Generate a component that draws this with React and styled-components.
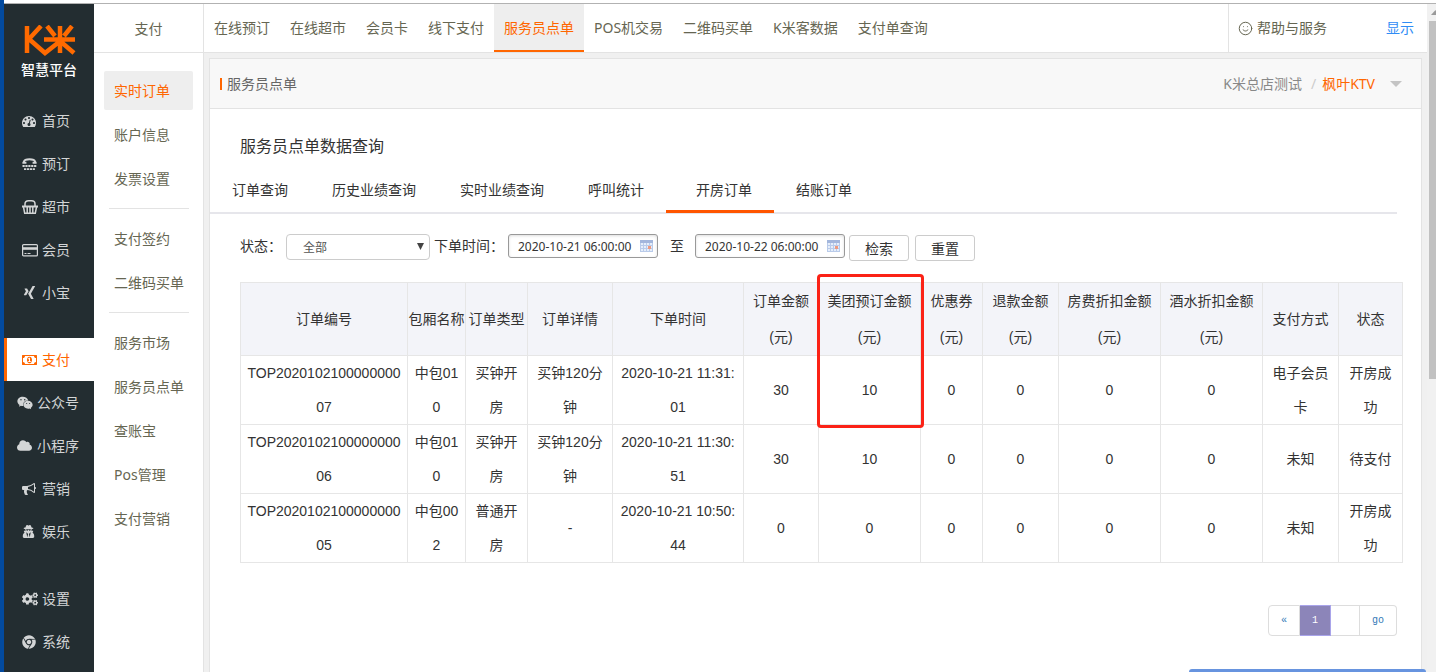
import React from "react";
import styled, { createGlobalStyle } from "styled-components";
import { FaXing, FaWeixin, FaCloud, FaUserSecret, FaCogs, FaChrome } from "react-icons/fa";
import { Smile } from "lucide-react";

const GlobalStyle = createGlobalStyle`
  * {
    box-sizing: border-box;
  }
  body {
    margin: 0;
    background-color: #f0f0f0;
    color: #333;
    font-family: "Noto Sans", "Noto Sans CJK SC", sans-serif;
    font-size: 14px;
    line-height: 20px;
  }
  a {
    color: inherit;
    text-decoration: none;
  }
  button, input, select {
    font-family: inherit;
  }
`;

const Window = styled.div`
  display: flex;
  flex-direction: column;
  min-height: 100vh;
  border-left: 4px solid #034a9e;
`;

const WindowEdge = styled.div`
  height: 4px;
  background-color: #fff;
  border-bottom: 1px solid #b2b2b2;
`;

const Page = styled.div`
  flex: 1;
  display: flex;
`;

const Sidebar = styled.nav`
  width: 90px;
  flex-shrink: 0;
  background-color: #232d31;
  color: #d3d5d6;
`;

const Brand = styled.div`
  display: flex;
  flex-direction: column;
  align-items: center;
  height: 95px;
  padding-top: 21px;
  svg {
    display: block;
  }
`;

const BrandName = styled.span`
  margin-top: 2px;
  color: #fff;
  font-size: 14px;
  font-weight: 500;
  line-height: 22px;
`;

const SideGroup = styled.div`
  margin-bottom: 24px;
`;

const SideLink = styled.a`
  display: flex;
  align-items: center;
  gap: 4px;
  height: 43px;
  padding-left: ${(props) => (props.$wide ? "13px" : "18px")};
  ${(props) =>
    props.$active &&
    `
    padding-left: 15px;
    border-left: 3px solid #ff6600;
    background-color: #fff;
    color: #ff6600;
  `}
`;

const IconSlot = styled.span`
  display: flex;
  align-items: center;
  width: 16px;
`;

const SubMenu = styled.nav`
  width: 110px;
  flex-shrink: 0;
  background-color: #fff;
  border-right: 1px solid #e3e3e3;
  color: #666652;
`;

const SubMenuTitle = styled.div`
  height: 49px;
  line-height: 49px;
  text-align: center;
  border-bottom: 1px solid #e3e3e3;
`;

const SubMenuList = styled.div`
  padding: 18px 10px;
  hr {
    margin: 10px 4px 10px 5px;
    border: 0;
    height: 1px;
    background-color: #e3e3e3;
  }
`;

const SubLink = styled.a`
  display: block;
  height: 39px;
  margin-bottom: 5px;
  padding-left: 10px;
  line-height: 39px;
  border-radius: 2px;
  white-space: nowrap;
  color: ${(props) => (props.$active ? "#ff6600" : "inherit")};
  background-color: ${(props) => (props.$active ? "#eeeeee" : "transparent")};
`;

const Main = styled.div`
  flex: 1;
  min-width: 0;
  display: flex;
  flex-direction: column;
`;

const TopBar = styled.header`
  display: flex;
  height: 49px;
  background-color: #fff;
  border-bottom: 1px solid #e3e3e3;
  color: #666652;
`;

const TopLink = styled.a`
  padding: 0 10px;
  line-height: 48px;
  white-space: nowrap;
  ${(props) =>
    props.$active &&
    `
    color: #ff6600;
    background-color: #eeeeee;
    border-bottom: 2px solid #ff6600;
  `}
`;

const Help = styled.div`
  display: flex;
  align-items: center;
  justify-content: space-between;
  width: 199px;
  margin-left: auto;
  padding: 0 13px 0 9px;
  border-left: 1px solid #e3e3e3;
  a {
    display: flex;
    align-items: center;
    gap: 4px;
  }
  a:last-child {
    color: #2f8cf5;
  }
`;

const Panel = styled.section`
  flex: 1;
  margin: 5px 5px 0;
  background-color: #fff;
  border: 1px solid #e3e3e3;
  border-bottom: 0;
`;

const PanelHeader = styled.div`
  display: flex;
  align-items: center;
  height: 50px;
  padding: 0 19px 0 10px;
  background-color: #f8f8f8;
  border-bottom: 1px solid #e3e3e3;
`;

const PanelTitle = styled.h1`
  display: flex;
  align-items: center;
  gap: 5px;
  margin: 0 auto 0 0;
  color: #666;
  font-size: 14px;
  font-weight: 400;
  &::before {
    content: "";
    width: 2px;
    height: 12px;
    background-color: #ff6600;
  }
`;

const Crumbs = styled.div`
  display: flex;
  align-items: center;
  color: #888;
  span {
    margin: 0 6px 0 9px;
    color: #ccc;
  }
  a:last-of-type {
    color: #ff6600;
  }
`;

const Caret = styled.i`
  margin-left: 15px;
  border: 6px solid transparent;
  border-top-color: #c4c4c4;
  border-bottom: 0;
`;

const Heading = styled.h2`
  margin: 25px 0 0 30px;
  font-size: 16px;
  font-weight: 400;
  line-height: 24px;
`;

const Tabs = styled.div`
  display: flex;
  align-items: flex-start;
  height: 56px;
  margin-right: 24px;
  border-bottom: 2px solid #e6e6eb;
`;

const Tab = styled.a`
  height: 55px;
  padding: 0 22px;
  line-height: 64px;
  ${(props) =>
    props.$active &&
    `
    padding-left: 30px;
    border-bottom: 3px solid #ff5500;
  `}
`;

const Filters = styled.form`
  display: flex;
  align-items: flex-start;
  height: 68px;
  padding: 20px 0 0 30px;
  label {
    line-height: 24px;
    white-space: nowrap;
  }
`;

const StatusSelect = styled.div`
  position: relative;
  margin: 0 4px;
  select {
    display: block;
    width: 144px;
    height: 26px;
    padding: 0 16px;
    appearance: none;
    background-color: #fff;
    border: 1px solid #ccc;
    border-radius: 4px;
    color: #555;
    font-size: 12px;
  }
  svg {
    position: absolute;
    right: 6px;
    top: 9px;
    pointer-events: none;
  }
`;

const DateRange = styled.div`
  display: flex;
  margin-left: 4px;
`;

const DateBox = styled.div`
  display: flex;
  align-items: center;
  width: 150px;
  height: 24px;
  padding: 0 2px 0 9px;
  border: 1px solid #999;
  border-radius: 3px;
  box-shadow: inset 0 1px 3px #ddd;
  input {
    flex: 1;
    min-width: 0;
    padding: 0;
    border: 0;
    background: transparent;
    color: #333;
    font-size: 12px;
  }
`;

const Until = styled.span`
  margin: 0 11px 0 12px;
  line-height: 24px;
`;

const FormButton = styled.button`
  width: 60px;
  height: 26px;
  margin: 1px 2px 0 4px;
  padding: 0;
  background-color: #fff;
  border: 1px solid #ccc;
  border-radius: 3px;
  color: #333;
  font-size: 14px;
`;

const OrderTable = styled.table`
  width: calc(100% - 48px);
  margin-left: 30px;
  table-layout: fixed;
  border-collapse: collapse;
  text-align: center;
  font-family: "Liberation Sans", "Noto Sans CJK SC", sans-serif;
  td {
    height: 69px;
    padding: 0 5px;
    border: 1px solid #e6e6e6;
    line-height: 34px;
    word-break: break-all;
  }
`;

const HeadCell = styled.th`
  position: ${(props) => (props.$marked ? "relative" : "static")};
  height: 73px;
  padding: 0;
  border: 1px solid #e6e6e6;
  background-color: #f3f4f9;
  font-weight: 400;
  line-height: 36px;
`;

const Highlight = styled.div`
  position: absolute;
  top: -9px;
  left: -2px;
  right: -4px;
  height: 154px;
  border: 3px solid #fb2216;
  border-radius: 4px;
  pointer-events: none;
`;

const Pager = styled.div`
  display: flex;
  justify-content: flex-end;
  margin: 42px 24px 0 0;
  font-family: "Liberation Mono", monospace;
  font-size: 10px;
  a, input {
    height: 31px;
    padding: 0;
    border: 1px solid #ddd;
    border-left-width: 0;
    line-height: 29px;
    text-align: center;
    color: #337ab7;
  }
  a {
    width: 31px;
  }
  input {
    width: 29px;
  }
  a:first-child {
    width: 32px;
    border-left-width: 1px;
    border-radius: 4px 0 0 4px;
  }
  a:last-child {
    width: 37px;
    border-radius: 0 4px 4px 0;
  }
  a[aria-current] {
    background-color: #8c85b9;
    border-color: #a9a4ea;
    color: #fff;
  }
`;

const Scrollbar = styled.div`
  width: 9px;
  flex-shrink: 0;
  padding-left: 2px;
  background-color: #f1f1f1;
  overflow: hidden;
  svg {
    display: block;
    height: 17px;
  }
  div {
    height: 358px;
    background-color: #c1c1c1;
  }
`;

const Toast = styled.div`
  position: fixed;
  right: 10px;
  bottom: 0;
  width: 237px;
  height: 3px;
  background-color: #6794df;
  border-radius: 3px 3px 0 0;
`;

const DashboardIcon = () => (
  <svg width="14" height="14" viewBox="0 0 1792 1792" fill="currentColor">
    <path d="M384 1152q0-53-37.5-90.5t-90.5-37.5-90.5 37.5-37.5 90.5 37.5 90.5 90.5 37.5 90.5-37.5 37.5-90.5zm192-448q0-53-37.5-90.5t-90.5-37.5-90.5 37.5-37.5 90.5 37.5 90.5 90.5 37.5 90.5-37.5 37.5-90.5zm428 481l101-382q6-26-7.5-48.5t-38.5-29.5-48 6.5-30 39.5l-101 382q-60 5-107 43.5t-63 98.5q-20 77 20 146t117 89 146-20 89-117q16-60-6-117t-72-91zm660-33q0-53-37.5-90.5t-90.5-37.5-90.5 37.5-37.5 90.5 37.5 90.5 90.5 37.5 90.5-37.5 37.5-90.5zm-640-640q0-53-37.5-90.5t-90.5-37.5-90.5 37.5-37.5 90.5 37.5 90.5 90.5 37.5 90.5-37.5 37.5-90.5zm448 192q0-53-37.5-90.5t-90.5-37.5-90.5 37.5-37.5 90.5 37.5 90.5 90.5 37.5 90.5-37.5 37.5-90.5zm320 448q0 261-141 483-19 29-54 29h-1402q-35 0-54-29-141-221-141-483 0-182 71-348t191-286 286-191 348-71 348 71 286 191 191 286 71 348z" />
  </svg>
);

const TtyIcon = () => (
  <svg width="15" height="14" viewBox="0 0 15 14" fill="none" stroke="currentColor">
    <path d="M2 6V4.500Q2.500 2.200 7.500 2.200T13 4.500V6" strokeWidth="2" />
    <path d="M.4 5.800h4M10.600 5.800h4" strokeWidth="2" />
    <path d="M.5 9h14M2 12.200h11" strokeWidth="1.800" strokeDasharray="2.200 .7" />
  </svg>
);

const BasketIcon = () => (
  <svg width="16" height="14" viewBox="0 0 16 14" fill="none" stroke="currentColor">
    <path d="M3 6V4Q3 .8 6.500.8h3Q13 .8 13 4v2" strokeWidth="1.500" />
    <path d="M0 6.500h16" strokeWidth="2" />
    <path d="M1.500 7l1.200 6.200h10.600L14.500 7M5.200 7v6M8 7v6M10.800 7v6" strokeWidth="1.500" />
  </svg>
);

const CardIcon = () => (
  <svg width="16" height="14" viewBox="0 0 16 14" fill="none" stroke="currentColor">
    <rect x=".6" y="1.600" width="14.800" height="11.300" rx="1" strokeWidth="1.200" />
    <path d="M1 5.500h14" strokeWidth="2.600" />
    <path d="M2.500 10.500h2M5.500 10.500h3" strokeWidth="1" />
  </svg>
);

const MoneyIcon = () => (
  <svg width="15" height="14" viewBox="0 0 1920 1792" fill="currentColor">
    <path d="M768 1152h384v-96h-128v-448h-114l-148 137 77 80q42-37 55-57h2v288h-128v96zm512-256q0 70-21 142t-59.5 134-101.5 101-138 39-138-39-101.5-101-59.5-134-21-142 21-142 59.5-134 101.5-101 138-39 138 39 101.5 101 59.5 134 21 142zm512 256v-512q-106 0-181-75t-75-181h-1152q0 106-75 181t-181 75v512q106 0 181 75t75 181h1152q0-106 75-181t181-75zm128-832v1152q0 26-19 45t-45 19h-1792q-26 0-45-19t-19-45v-1152q0-26 19-45t45-19h1792q26 0 45 19t19 45z" />
  </svg>
);

const BullhornIcon = () => (
  <svg width="14" height="14" viewBox="0 0 1792 1792" fill="currentColor">
    <path d="M1664 640q53 0 90.5 37.5t37.5 90.5-37.5 90.5-90.5 37.5v384q0 52-38 90t-90 38q-417-347-812-380-58 19-91 66t-31 100.5 40 92.5q-20 33-23 65.5t6 58 33.5 55 48 50 61.5 50.5q-29 58-111.5 83t-168.5 11.5-132-55.5q-7-23-29.5-87.5t-32-94.5-23-89-15-101 3.5-98.5 22-110.5h-122q-66 0-113-47t-47-113v-192q0-66 47-113t113-47h480q435 0 896-384 52 0 90 38t38 90v384zm-128 604v-954q-394 302-768 343v270q377 42 768 341z" />
  </svg>
);

const CalendarIcon = () => (
  <svg width="16" height="16" viewBox="0 0 16 16">
    <path d="M1 2h13v12H1z" fill="#e6eefa" />
    <path d="M1 2h13v3H1z" fill="#a3b6dc" />
    <path d="M1.500 5v9M4.500 5v9M7.500 5v9M10.500 5v9M13.500 5v9M1 7.500h13M1 10.500h13M1 13.500h13" stroke="#b9cbea" />
    <path d="M9 8h3v3H9z" fill="#ee9a80" />
  </svg>
);

const Logo = () => (
  <svg width="54" height="32" viewBox="0 0 54 32" fill="none" stroke="#ff6a00" strokeWidth="4.500">
    <path d="M5 1v27M19 1L7 14l16 14 14-11M25 1l8 10M50 1l-8 10M22 14.500h31M38 1v27M38 16l14 12" />
  </svg>
);

const sideGroups = [
  [
    { label: "首页", icon: <DashboardIcon /> },
    { label: "预订", icon: <TtyIcon /> },
    { label: "超市", icon: <BasketIcon /> },
    { label: "会员", icon: <CardIcon /> },
    { label: "小宝", icon: <FaXing size={15} /> },
  ],
  [
    { label: "支付", icon: <MoneyIcon />, active: true },
    { label: "公众号", icon: <FaWeixin size={16} />, wide: true },
    { label: "小程序", icon: <FaCloud size={15} />, wide: true },
    { label: "营销", icon: <BullhornIcon /> },
    { label: "娱乐", icon: <FaUserSecret size={13} /> },
  ],
  [
    { label: "设置", icon: <FaCogs size={16} /> },
    { label: "系统", icon: <FaChrome size={14} /> },
  ],
];

const subGroups = [
  ["实时订单", "账户信息", "发票设置"],
  ["支付签约", "二维码买单"],
  ["服务市场", "服务员点单", "查账宝", "Pos管理", "支付营销"],
];

const topLinks = ["在线预订", "在线超市", "会员卡", "线下支付", "服务员点单", "POS机交易", "二维码买单", "K米客数据", "支付单查询"];

const tabs = ["订单查询", "历史业绩查询", "实时业绩查询", "呼叫统计", "开房订单", "结账订单"];

const columns = [
  { title: "订单编号", width: 167 },
  { title: "包厢名称", width: 58 },
  { title: "订单类型", width: 62 },
  { title: "订单详情", width: 85 },
  { title: "下单时间", width: 131 },
  { title: "订单金额(元)", width: 75 },
  { title: "美团预订金额(元)", width: 102, marked: true },
  { title: "优惠券(元)", width: 62 },
  { title: "退款金额(元)", width: 76 },
  { title: "房费折扣金额(元)", width: 102 },
  { title: "酒水折扣金额(元)", width: 102 },
  { title: "支付方式", width: 76 },
  { title: "状态", width: 64 },
];

const orders = [
  ["TOP202010210000000007", "中包010", "买钟开房", "买钟120分钟", "2020-10-21 11:31:01", 30, 10, 0, 0, 0, 0, "电子会员卡", "开房成功"],
  ["TOP202010210000000006", "中包010", "买钟开房", "买钟120分钟", "2020-10-21 11:30:51", 30, 10, 0, 0, 0, 0, "未知", "待支付"],
  ["TOP202010210000000005", "中包002", "普通开房", "-", "2020-10-21 10:50:44", 0, 0, 0, 0, 0, 0, "未知", "开房成功"],
];

function DateInput({ id, value, label }) {
  return (
    <DateBox>
      <input id={id} aria-label={label} type="text" defaultValue={value} />
      <CalendarIcon />
    </DateBox>
  );
}

function SideNav() {
  return (
    <Sidebar>
      <Brand>
        <Logo />
        <BrandName>智慧平台</BrandName>
      </Brand>
      {sideGroups.map((group, i) => (
        <SideGroup key={i}>
          {group.map((item) => (
            <SideLink key={item.label} href="#" $active={item.active} $wide={item.wide}>
              <IconSlot>{item.icon}</IconSlot>
              {item.label}
            </SideLink>
          ))}
        </SideGroup>
      ))}
    </Sidebar>
  );
}

function Orders() {
  return (
    <OrderTable>
      <colgroup>
        {columns.map((col) => (
          <col key={col.title} width={col.width} />
        ))}
      </colgroup>
      <thead>
        <tr>
          {columns.map((col) => (
            <HeadCell key={col.title} $marked={col.marked}>
              {col.title}
              {col.marked && <Highlight />}
            </HeadCell>
          ))}
        </tr>
      </thead>
      <tbody>
        {orders.map((order) => (
          <tr key={order[0]}>
            {order.map((cell, i) => (
              <td key={i}>{cell}</td>
            ))}
          </tr>
        ))}
      </tbody>
    </OrderTable>
  );
}

function App() {
  return (
    <>
      <GlobalStyle />
      <Window>
        <WindowEdge />
        <Page>
          <SideNav />
          <SubMenu>
            <SubMenuTitle>支付</SubMenuTitle>
            <SubMenuList>
              {subGroups.map((group, i) => (
                <React.Fragment key={i}>
                  {i > 0 && <hr />}
                  {group.map((label) => (
                    <SubLink key={label} href="#" $active={label === "实时订单"}>
                      {label}
                    </SubLink>
                  ))}
                </React.Fragment>
              ))}
            </SubMenuList>
          </SubMenu>
          <Main>
            <TopBar>
              {topLinks.map((label) => (
                <TopLink key={label} href="#" $active={label === "服务员点单"}>
                  {label}
                </TopLink>
              ))}
              <Help>
                <a href="#">
                  <Smile size={15} strokeWidth={1.6} />
                  帮助与服务
                </a>
                <a href="#">显示</a>
              </Help>
            </TopBar>
            <Panel>
              <PanelHeader>
                <PanelTitle>服务员点单</PanelTitle>
                <Crumbs>
                  <a href="#">K米总店测试</a>
                  <span>/</span>
                  <a href="#">枫叶KTV</a>
                  <Caret />
                </Crumbs>
              </PanelHeader>
              <Heading>服务员点单数据查询</Heading>
              <Tabs>
                {tabs.map((label) => (
                  <Tab key={label} href="#" $active={label === "开房订单"}>
                    {label}
                  </Tab>
                ))}
              </Tabs>
              <Filters>
                <label htmlFor="status">状态：</label>
                <StatusSelect>
                  <select id="status">
                    <option>全部</option>
                  </select>
                  <svg width="7" height="7" viewBox="0 0 7 7" fill="#444">
                    <path d="M0 0h7L3.500 7z" />
                  </svg>
                </StatusSelect>
                <label htmlFor="start">下单时间：</label>
                <DateRange>
                  <DateInput id="start" value="2020-10-21 06:00:00" />
                  <Until>至</Until>
                  <DateInput id="end" value="2020-10-22 06:00:00" label="至" />
                </DateRange>
                <FormButton type="button">检索</FormButton>
                <FormButton type="button">重置</FormButton>
              </Filters>
              <Orders />
              <Pager>
                <a href="#">«</a>
                <a href="#" aria-current="page">1</a>
                <input type="text" aria-label="go" />
                <a href="#">go</a>
              </Pager>
            </Panel>
          </Main>
          <Scrollbar>
            <svg width="11" height="17" viewBox="0 0 11 17">
              <path d="M2 11h9L6.500 6z" fill="#9a9a9a" />
            </svg>
            <div />
          </Scrollbar>
        </Page>
      </Window>
      <Toast />
    </>
  );
}

export default App;
